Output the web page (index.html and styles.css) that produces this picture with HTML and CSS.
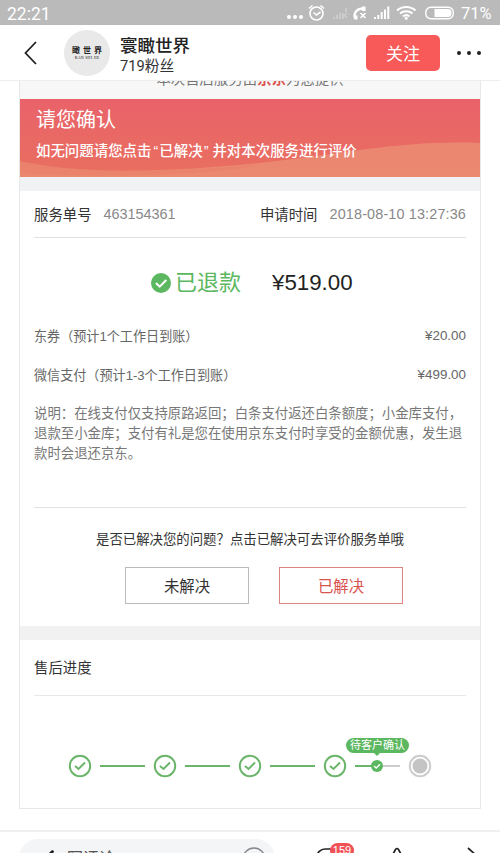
FILE: index.html
```
<!DOCTYPE html>
<html lang="zh-CN">
  <head>
    <meta charset="UTF-8" />
    <meta name="viewport" content="width=device-width, initial-scale=1.0" />
    <title>寰瞰世界</title>
    <link rel="stylesheet" href="styles.css">
  </head>
  <body>
    <div class="screen">
      <div class="status-bar">
        <span class="clock">22:21</span>
        <svg class="status-icons" width="176" height="25" viewBox="0 0 176 25">
          <g fill="#fff">
            <circle cx="4" cy="17" r="2" />
            <circle cx="10" cy="17" r="2" />
            <circle cx="16" cy="17" r="2" />
          </g>
          <!-- alarm -->
          <g fill="none" stroke="#fff" stroke-width="1.6">
            <circle cx="31.500" cy="13.500" r="6.500" />
            <path d="M28.500 12.500l3 2.500 4-3M24 8.500l3.500-3M39 8.500l-3.500-3" />
          </g>
          <!-- sim 1, no signal -->
          <path d="M49 19v-2M52 19v-4M55 19v-6M58 19v-5M61 12V8" stroke="#cdcdcd" stroke-width="1.800" />
          <path d="M57 13l5 5M62 13l-5 5" stroke="#cdcdcd" stroke-width="1.400" />
          <!-- call -->
          <path d="M70 18.500c-1.500-6 2-10.500 9.500-10" fill="none" stroke="#fff" stroke-width="2.400" />
          <path d="M68.500 15.500h4v4h-3zM77 6.500h3.500v4.500H77z" fill="#fff" />
          <path d="M75.500 13l5 5M80.500 13l-5 5" stroke="#fff" stroke-width="1.500" />
          <!-- sim 2 -->
          <path d="M90 19v-2M93.300 19v-4M96.700 19v-7M100 19V9.500M103.300 19V6.500" stroke="#fff" stroke-width="2" />
          <!-- wifi -->
          <g fill="none" stroke="#fff" stroke-width="2">
            <path d="M112 10.500c5.500-4.700 13-4.700 18.500 0M115 13.500c3.500-3 9-3 12.500 0M118 16.400c2-1.600 4.500-1.600 6.500 0" />
          </g>
          <circle cx="121.200" cy="18.300" r="1.500" fill="#fff" />
          <!-- battery -->
          <rect x="140.800" y="7.200" width="27.500" height="11.600" rx="5" fill="none" stroke="#fff" stroke-width="1.400" />
          <path d="M149.500 9H163a3.500 3.500 0 0 1 3.500 3.500v1A3.500 3.500 0 0 1 163 17h-13.500z" fill="#fff" />
        </svg>
        <span class="battery-text">71%</span>
      </div>

      <div class="header">
        <svg class="back" width="14" height="26" viewBox="0 0 14 26">
          <path d="M12 2L1.500 13 12 24" fill="none" stroke="#222" stroke-width="1.800" />
        </svg>
        <div class="avatar">
          <span class="avatar-name">瞰世界</span>
          <span class="avatar-sub">KAN SHI JIE</span>
        </div>
        <div class="author">
          <span class="author-name">寰瞰世界</span>
          <span class="author-fans">719粉丝</span>
        </div>
        <button class="follow">关注</button>
        <div class="more"><i></i><i></i><i></i></div>
      </div>

      <div class="content">
        <div class="card">
          <div class="provider">
            <p>本次售后服务由<b>京东</b>为您提供</p>
          </div>
          <div class="banner">
            <svg class="wave" viewBox="0 0 461 78" preserveAspectRatio="none">
              <path d="M0 62C55 75 145 74 240 64 330 54 385 41 461 44V78H0z" fill="#ec9a7c" fill-opacity=".6" />
              <path d="M0 62C55 75 145 74 240 66 200 74 100 80 0 74z" fill="#e9705f" fill-opacity=".25" />
            </svg>
            <h1>请您确认</h1>
            <p>如无问题请您点击<span class="quote-open">“</span>已解决<span class="quote-close">”</span>并对本次服务进行评价</p>
          </div>
          <div class="gap"></div>

          <div class="order-row">
            <span class="label">服务单号</span>
            <span class="value">463154361</span>
            <span class="label time-label">申请时间</span>
            <span class="value date">2018-08-10 13:27:36</span>
          </div>

          <div class="refund">
            <svg width="20" height="20" viewBox="0 0 20 20">
              <circle cx="10" cy="10" r="10" fill="#5cb860" />
              <path d="M5 10l3.700 3.700L15.300 7" fill="none" stroke="#fff" stroke-width="2" />
            </svg>
            <span class="refund-state">已退款</span>
            <span class="refund-total">¥519.00</span>
          </div>

          <div class="pay-row">
            <span>东券（预计1个工作日到账）</span>
            <span class="amount">¥20.00</span>
          </div>
          <div class="pay-row">
            <span>微信支付（预计1-3个工作日到账）</span>
            <span class="amount">¥499.00</span>
          </div>
          <p class="note">说明：在线支付仅支持原路返回；白条支付返还白条额度；小金库支付，<br>退款至小金库；支付有礼是您在使用京东支付时享受的金额优惠，发生退<br>款时会退还京东。</p>

          <div class="confirm">
            <p>是否已解决您的问题？点击已解决可去评价服务单哦</p>
            <div class="buttons">
              <button class="btn">未解决</button>
              <button class="btn btn-red">已解决</button>
            </div>
          </div>
          <div class="gap gap-gray"></div>

          <h2 class="progress-title">售后进度</h2>
          <div class="steps">
            <svg class="step" viewBox="0 0 24 24"><circle cx="12" cy="12" r="10.200" /><path d="M7 12l3.500 3L17 8.500" /></svg>
            <div class="line"></div>
            <svg class="step" viewBox="0 0 24 24"><circle cx="12" cy="12" r="10.200" /><path d="M7 12l3.500 3L17 8.500" /></svg>
            <div class="line"></div>
            <svg class="step" viewBox="0 0 24 24"><circle cx="12" cy="12" r="10.200" /><path d="M7 12l3.500 3L17 8.500" /></svg>
            <div class="line"></div>
            <svg class="step" viewBox="0 0 24 24"><circle cx="12" cy="12" r="10.200" /><path d="M7 12l3.500 3L17 8.500" /></svg>
            <div class="line line-half">
              <span class="tip">待客户确认</span>
              <svg class="dot" viewBox="0 0 12 12"><circle cx="6" cy="6" r="6" fill="#5cb860" /><path d="M3 6l2.200 2L9 4.300" fill="none" stroke="#fff" stroke-width="1.400" /></svg>
            </div>
            <svg class="step step-gray" viewBox="0 0 24 24"><circle cx="12" cy="12" r="10.200" /><circle class="core" cx="12" cy="12" r="7.500" /></svg>
          </div>
        </div>
      </div>

      <div class="toolbar">
        <div class="comment-box">
          <svg width="14" height="18" viewBox="0 0 14 18"><path d="M7 1L2 6l-1 8 5-2 3-10z" fill="#222" /></svg>
          <span>写评论</span>
          <svg class="smile" width="24" height="24" viewBox="0 0 24 24"><circle cx="12" cy="12" r="11" fill="none" stroke="#85858f" stroke-width="1.300" /></svg>
        </div>
        <div class="tool tool-comment">
          <svg width="28" height="24" viewBox="0 0 28 24"><rect x="1" y="1" width="25" height="20" rx="8" fill="none" stroke="#222" stroke-width="1.700" /></svg>
          <span class="badge">159</span>
        </div>
        <svg class="tool tool-star" width="28" height="26" viewBox="0 0 28 26"><path d="M12.500 2.500q1.500-2 3 0L19 9l7 1-5 6 1 8-8-4-8 4 1-8-5-6 7-1z" fill="none" stroke="#222" stroke-width="1.700" /></svg>
        <svg class="tool tool-share" width="28" height="24" viewBox="0 0 28 24"><path d="M16 1l10 9-10 9M25 10H12C6 10 3 14 2 21" fill="none" stroke="#222" stroke-width="1.700" /></svg>
      </div>
    </div>
  </body>
</html>
```

FILE: styles.css
```
* {
  box-sizing: border-box;
}
body {
  margin: 0;
  font-family: "Liberation Sans", "Noto Sans CJK SC", sans-serif;
  background: #fff;
  color: #333;
}
h1, h2, p {
  margin: 0;
  font-weight: normal;
}
button {
  font-family: inherit;
  padding: 0;
}
svg {
  display: block;
  flex: none;
}
.screen {
  width: 500px;
  height: 853px;
  overflow: hidden;
  display: flex;
  flex-direction: column;
}

/* status bar */
.status-bar {
  flex: none;
  height: 25px;
  background: #bababa;
  color: #fff;
  display: flex;
  align-items: center;
  padding: 0 7px 0 7px;
  font-family: Roboto, sans-serif;
  font-size: 17.5px;
}
.clock {
  flex: 1;
  padding-top: 2px;
}
.battery-text {
  width: 32px;
  padding-top: 2px;
  font-size: 16.5px;
}

/* header */
.header {
  flex: none;
  height: 56px;
  display: flex;
  align-items: center;
  padding: 0 19px 0 24px;
  border-bottom: 1px solid #eee;
}
.avatar {
  width: 46px;
  height: 46px;
  margin: 1px 0 0 26px;
  border-radius: 50%;
  background: #e9e9e9;
  display: flex;
  flex-direction: column;
  align-items: center;
  justify-content: center;
  font-family: "Noto Sans CJK SC", sans-serif;
  color: #222;
}
.avatar-name {
  font-size: 8px;
  line-height: 10px;
  font-weight: bold;
  letter-spacing: 3px;
  margin-right: -3px;
}
.avatar-sub {
  font-family: "Liberation Serif", serif;
  font-size: 4px;
  line-height: 6px;
  letter-spacing: 0.2px;
}
.author {
  flex: 1;
  margin-left: 10px;
  padding-top: 4px;
  display: flex;
  flex-direction: column;
}
.author-name {
  font-size: 17.5px;
  line-height: 23px;
  font-family: "Noto Sans CJK SC", sans-serif;
  font-weight: 500;
  color: #222;
}
.author-fans {
  font-family: Roboto, "Noto Sans CJK SC", sans-serif;
  font-size: 14.7px;
  line-height: 21px;
}
.follow {
  width: 74px;
  height: 36px;
  border: none;
  border-radius: 5px;
  background: #f85959;
  color: #fff;
  font-size: 17px;
}
.more {
  display: flex;
  gap: 6px;
  margin-left: 17px;
}
.more i {
  width: 4px;
  height: 4px;
  border-radius: 50%;
  background: #222;
}

/* article picture */
.content {
  flex: none;
  height: 749px;
  padding: 0 19px;
  overflow: hidden;
}
.card {
  height: 728px;
  border: 1px solid #e8e8e8;
  border-top: none;
}
.provider {
  height: 18px;
  background: #f7f7f7;
  overflow: hidden;
  text-align: center;
  font-size: 14.4px;
  line-height: 20px;
  color: #777;
}
.provider p {
  margin-top: -12px;
}
.provider b {
  color: #d9534f;
}
.banner {
  position: relative;
  height: 78px;
  padding: 6px 0 0 16px;
  background: linear-gradient(#e9626a, #e96f5f);
  color: #fff;
}
.banner h1 {
  position: relative;
  font-size: 20px;
  line-height: 30px;
}
.banner p {
  position: relative;
  font-size: 14.45px;
  line-height: 22px;
  margin-top: 5px;
  font-weight: 500;
}
.quote-open {
  margin: 0 1px 0 2px;
}
.quote-close {
  margin: 0 4px 0 1px;
}
.wave {
  position: absolute;
  left: 0;
  top: 0;
  width: 100%;
  height: 100%;
}
.gap {
  height: 14px;
  background: #f0f2f3;
}
.gap-gray {
  background: #f1f1f1;
}
.order-row {
  height: 47px;
  margin: 0 14px;
  display: flex;
  align-items: center;
  border-bottom: 1px solid #e2e2e2;
  font-size: 14.4px;
}
.label {
  color: #333;
  padding-bottom: 2px;
}
.value {
  margin-left: 12px;
  color: #888;
}
.date {
  letter-spacing: 0.15px;
}
.time-label {
  margin-left: auto;
}
.refund {
  height: 78px;
  padding: 11px 0 0 131px;
  display: flex;
  align-items: center;
}
.refund-state {
  margin-left: 4px;
  padding-bottom: 5px;
  font-size: 22px;
  color: #5cb860;
}
.refund-total {
  margin-left: 31px;
  font-size: 22.3px;
  color: #222;
}
.pay-row {
  height: 39px;
  padding: 0 14px;
  display: flex;
  align-items: center;
  justify-content: space-between;
  font-size: 13.1px;
  color: #666;
}
.amount {
  font-size: 13.4px;
}
.note {
  padding: 10px 0 0 14px;
  height: 113px;
  font-size: 13.38px;
  line-height: 20px;
  white-space: nowrap;
  color: #777;
}
.confirm {
  height: 119px;
  margin: 0 14px;
  border-top: 1px solid #e2e2e2;
  text-align: center;
  font-size: 13.4px;
}
.confirm p {
  padding-top: 22px;
  line-height: 20px;
}
.buttons {
  display: flex;
  gap: 30px;
  padding: 17px 0 0 91px;
}
.btn {
  width: 124px;
  height: 37px;
  padding-bottom: 2px;
  border: 1px solid #bbb;
  background: #fff;
  color: #333;
  font-size: 15.4px;
}
.btn-red {
  border-color: #dc8580;
  color: #d9534f;
}
.progress-title {
  height: 56px;
  margin: 0 14px;
  border-bottom: 1px solid #e8e8e8;
  font-size: 14.4px;
  line-height: 56px;
}
.steps {
  display: flex;
  align-items: center;
  padding: 58px 0 0 48px;
}
.step {
  width: 24px;
  height: 24px;
  fill: none;
  stroke: #6bb56b;
  stroke-width: 2;
}
.step-gray {
  stroke: #ccc;
}
.core {
  fill: #c4c4c4;
  stroke: none;
}
.line {
  position: relative;
  flex: none;
  width: 45px;
  height: 2px;
  margin: 0 8px;
  background: #6bb56b;
}
.line-half {
  background: linear-gradient(to right, #6bb56b 50%, #ccc 50%);
}
.dot {
  position: absolute;
  left: 16px;
  top: -5px;
  width: 12px;
  height: 12px;
}
.tip {
  position: absolute;
  left: -9px;
  top: -27px;
  width: 63px;
  height: 15px;
  border-radius: 8px;
  background: #5cb860;
  color: #fff;
  font-size: 11px;
  line-height: 15px;
  text-align: center;
  white-space: nowrap;
}
.tip::after {
  content: "";
  position: absolute;
  left: 28px;
  bottom: -3px;
  border: 3px solid transparent;
  border-top-color: #5cb860;
  border-bottom: none;
}

/* bottom bar */
.toolbar {
  flex: none;
  height: 48px;
  border-top: 2px solid #f0f0f0;
  display: flex;
  align-items: flex-start;
  padding: 7px 0 0 19px;
}
.comment-box {
  flex: none;
  width: 256px;
  height: 38px;
  padding: 10px 9px 0 26px;
  border-radius: 19px;
  background: #f4f5f6;
  display: flex;
  align-items: flex-start;
  font-size: 16px;
  line-height: 20px;
  color: #555;
}
.comment-box span {
  margin-left: 8px;
}
.smile {
  margin: -2px 0 0 auto;
}
.tool-comment {
  position: relative;
  margin: 9px 0 0 41px;
}
.badge {
  position: absolute;
  left: 14px;
  top: -5px;
  width: 24px;
  height: 15px;
  border-radius: 8px;
  background: #f05056;
  color: #fff;
  font-size: 11px;
  line-height: 15px;
  text-align: center;
}
.tool-star {
  margin: 8px 0 0 39px;
}
.tool-share {
  margin: 8px 0 0 41px;
}
```
